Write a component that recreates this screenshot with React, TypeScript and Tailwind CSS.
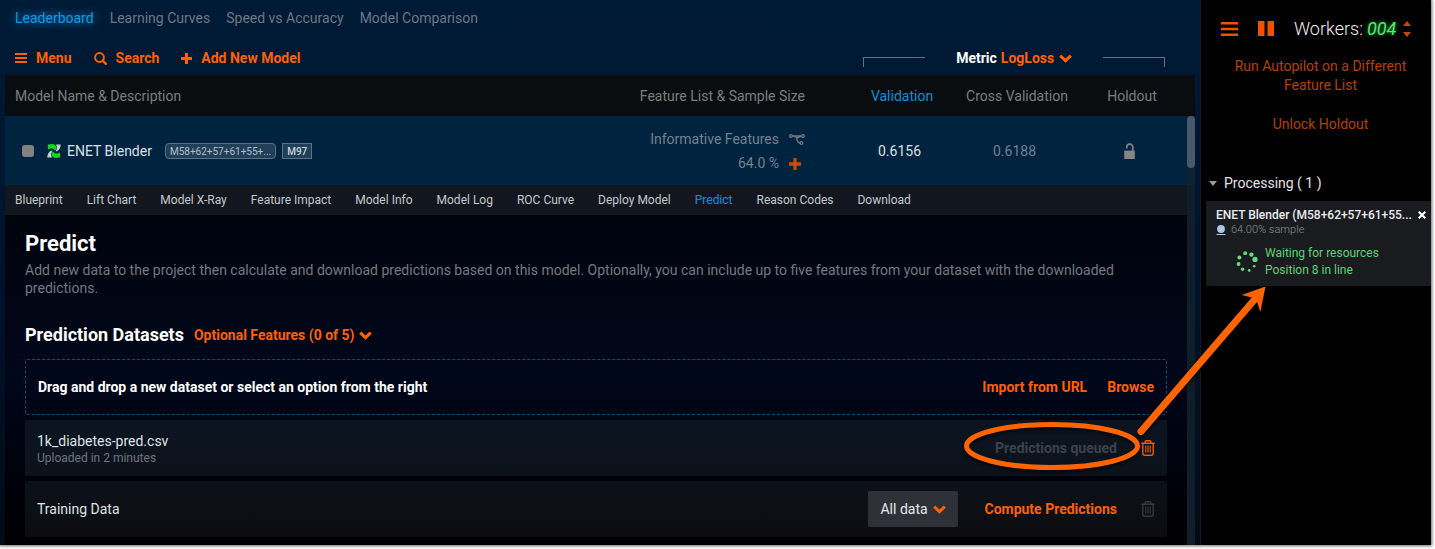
import React from "react";

const views = ["Leaderboard", "Learning Curves", "Speed vs Accuracy", "Model Comparison"];

const modelTabs = [
  "Blueprint",
  "Lift Chart",
  "Model X-Ray",
  "Feature Impact",
  "Model Info",
  "Model Log",
  "ROC Curve",
  "Deploy Model",
  "Predict",
  "Reason Codes",
  "Download",
];

type IconProps = { className?: string };

function BarsIcon({ className }: IconProps) {
  return (
    <svg viewBox="0 0 12 10" className={className} fill="currentColor" aria-hidden="true">
      <path d="M0 0h12v2H0zM0 4h12v2H0zM0 8h12v2H0z" />
    </svg>
  );
}

function SearchIcon({ className }: IconProps) {
  return (
    <svg viewBox="0 0 13 13" className={className} fill="none" stroke="currentColor" strokeWidth="2" aria-hidden="true">
      <circle cx="5.5" cy="5.5" r="4.4" />
      <path d="M8.8 8.8 11.8 11.8" strokeWidth="2.4" strokeLinecap="round" />
    </svg>
  );
}

function PlusIcon({ className }: IconProps) {
  return (
    <svg viewBox="0 0 11 11" className={className} fill="currentColor" aria-hidden="true">
      <path d="M4 0h3v4h4v3H7v4H4V7H0V4h4z" />
    </svg>
  );
}

function ChevronIcon({ className }: IconProps) {
  return (
    <svg viewBox="0 0 13 9" className={className} fill="none" stroke="currentColor" strokeWidth="3" aria-hidden="true">
      <path d="M1.2 1.6 6.5 6.6l5.3-5" />
    </svg>
  );
}

function TrashIcon({ className }: IconProps) {
  return (
    <svg viewBox="0 0 14 16" className={className} fill="none" stroke="currentColor" strokeWidth="1.4" aria-hidden="true">
      <path d="M0.3 3.2h13.4M4.2 3V1.6Q4.2 0.8 5 0.8h4q0.8 0 0.8 0.8V3M1.8 3.4v10.4q0 1.4 1.4 1.4h7.6q1.4 0 1.4-1.4V3.4" />
      <path d="M4.8 5.6v7M7 5.6v7M9.2 5.6v7" strokeWidth="1.1" />
    </svg>
  );
}

function FeatureListIcon() {
  return (
    <svg viewBox="0 0 16 11" className="h-[11px] w-4" fill="none" stroke="#6f7a83" strokeWidth="1.3" aria-hidden="true">
      <circle cx="2" cy="2" r="1.3" />
      <circle cx="14" cy="2" r="1.3" />
      <circle cx="12.4" cy="9" r="1.3" />
      <path d="M3.4 2h9.2M5 2.4l2.6 1.4q.6 4.600 3.400 5.200M11.600 2.600 8 3.800" />
    </svg>
  );
}

function BlenderLogo() {
  return (
    <svg viewBox="0 0 14 14" className="h-[14px] w-[14px] shrink-0" aria-hidden="true">
      <path d="M9 0.400h4.700C13.600 4 12 6.800 8.600 7.400 9.600 5.400 10.400 3.400 9 .4z" fill="#b4d3cc" />
      <path d="M5 13.600H.3C.4 10 2 7.200 5.400 6.600 4.400 8.600 3.600 10.600 5 13.600z" fill="#b4d3cc" />
      <path d="M.8.8Q5-.8 8 .8q2.400 2.600.2 6Q6.600 3.800 3.600 4.600L1 5.600z" fill="#0fd91a" />
      <path d="M13.200 13.200q-4.200 1.600-7.200 0-2.400-2.600-.2-6 1.600 3 4.600 2.200l2.600-1z" fill="#0fd91a" />
    </svg>
  );
}

function UnlockIcon() {
  return (
    <svg viewBox="0 0 11 16" className="h-4 w-[11px]" aria-hidden="true">
      <path d="M0.2 7.6h10.600V16H0.200z" fill="#858585" />
      <path d="M8.800 8V4.200a3 3 0 0 0-6-.2v1.600" fill="none" stroke="#858585" strokeWidth="1.6" />
    </svg>
  );
}

function Spinner() {
  const dots = [
    [11.2, 2.2, 1.9],
    [17.4, 3.6, 2.2],
    [21, 8.4, 2.6],
    [20.2, 15.2, 1.3],
    [15.2, 19.4, 1.4],
    [8.6, 18.2, 1.7],
    [4.6, 13, 1.9],
    [5.4, 6.6, 2],
  ];
  return (
    <svg viewBox="2 0 22 22" className="h-[22px] w-[22px] shrink-0" fill="#63dc7c" aria-hidden="true">
      {dots.map(([x, y, r]) => (
        <circle key={x} cx={x} cy={y} r={r} />
      ))}
    </svg>
  );
}

function Toolbar() {
  const action = "flex items-center gap-[9px] text-[14px] font-bold text-[#ff6000]";
  return (
    <div className="flex h-[39px] items-center pl-[15px] pr-[35px] pt-[5px]">
      <div className="flex flex-1 items-center gap-[22px]">
        <button className={action}>
          <BarsIcon className="h-[10px] w-3" />
          Menu
        </button>
        <button className={action}>
          <SearchIcon className="h-[13px] w-[13px]" />
          Search
        </button>
        <button className={action}>
          <PlusIcon className="h-[11px] w-[11px]" />
          Add New Model
        </button>
      </div>
      <div className="flex w-[302px] items-center justify-between">
        <span className="mt-2 h-[10px] w-[62px] border-l border-t border-[#667482]" />
        <label className="flex items-center gap-1 text-[14px] font-bold text-white">
          Metric
          <span className="flex items-center gap-1 text-[#ff6000]">
            <select className="appearance-none bg-transparent">
              <option>LogLoss</option>
            </select>
            <ChevronIcon className="h-[9px] w-[13px]" />
          </span>
        </label>
        <span className="mt-2 h-[10px] w-[62px] border-r border-t border-[#667482]" />
      </div>
    </div>
  );
}

function Leaderboard() {
  return (
    <table className="w-full table-fixed border-collapse text-[14px]">
      <colgroup>
        <col />
        <col className="w-[320px]" />
        <col className="w-[110px]" />
        <col className="w-[120px]" />
        <col className="w-[110px]" />
        <col className="w-2" />
      </colgroup>
      <thead>
        <tr className="h-[41px] bg-[#090d0f] text-[#7b7d7f] [&>th]:pt-[2px]">
          <th className="pl-[10px] text-left font-normal">Model Name &amp; Description</th>
          <th className="pr-[42px] text-right font-normal">Feature List &amp; Sample Size</th>
          <th className="font-normal text-[#0b8fdc]">Validation</th>
          <th className="font-normal">Cross Validation</th>
          <th className="font-normal">Holdout</th>
          <td />
        </tr>
      </thead>
      <tbody>
        <tr className="h-[69px] bg-[#002340]">
          <td className="pl-[17px] pt-px">
            <div className="flex items-center">
              <input
                type="checkbox"
                aria-label="Select ENET Blender"
                className="mr-[13px] h-3 w-3 appearance-none rounded-[3px] bg-[#828282]"
              />
              <BlenderLogo />
              <span className="ml-[6px] mr-[13px] text-[#dbe0e4]">ENET Blender</span>
              <span className="mr-[6px] flex h-4 items-center rounded-[4px] border border-[#5c7183] bg-[#20405a] px-1 text-[10px] text-[#b3bdc5]">
                M58+62+57+61+55+...
              </span>
              <span className="flex h-4 items-center border border-[#5c7183] bg-[#20405a] px-1 text-[10px] font-medium text-[#ccd3d8]">
                M97
              </span>
            </div>
          </td>
          <td className="pr-[42px] pt-[2px] text-[#75818c]">
            <div className="flex h-6 items-center justify-end gap-[10px]">
              Informative Features
              <FeatureListIcon />
            </div>
            <div className="flex h-6 items-center justify-end gap-[10px]">
              64.0 %
              <button aria-label="Add sample size" className="flex w-4 text-[#c74d09]">
                <PlusIcon className="h-3 w-3" />
              </button>
            </div>
          </td>
          <td className="pr-[5px] pt-[2px] text-center text-[#dbe0e4]">0.6156</td>
          <td className="pr-[5px] pt-[2px] text-center text-[#75818c]">0.6188</td>
          <td>
            <div className="flex justify-center pr-[5px]">
              <UnlockIcon />
            </div>
          </td>
          <td className="bg-[#0d2233] align-top">
            <div className="h-[52px] rounded-full bg-[#4a5969]" />
          </td>
        </tr>
      </tbody>
    </table>
  );
}

function Predict() {
  return (
    <section className="bg-linear-to-b from-[#00040d] via-[#00071a] to-[#000003] px-5 pb-2 pt-[15px]">
      <h1 className="text-[22px] leading-[28px] font-bold text-white">Predict</h1>
      <p className="mt-[3px] text-[14px] leading-[18px] text-[#747a82]">
        Add new data to the project then calculate and download predictions based on this model. Optionally, you can
        include up to five features from your dataset with the downloaded predictions.
      </p>
      <div className="mt-[26px] flex items-center gap-[10px]">
        <h2 className="text-[18px] leading-6 font-bold text-white">Prediction Datasets</h2>
        <button className="flex items-center gap-1 text-[14px] font-bold text-[#ff6000]">
          Optional Features (0 of 5)
          <ChevronIcon className="h-[9px] w-[13px]" />
        </button>
      </div>
      <div className="mt-3 flex h-14 items-center rounded-[2px] border border-dashed border-[#06507c] px-3 text-[14px] font-bold">
        <span className="flex-1 text-white">Drag and drop a new dataset or select an option from the right</span>
        <button className="mr-5 text-[#ff6000]">Import from URL</button>
        <button className="text-[#ff6000]">Browse</button>
      </div>
      <div className="mt-[5px] flex h-14 items-center rounded-[2px] bg-linear-to-b from-[#0b1521] to-[#0c121b] px-3">
        <div className="flex-1 pt-[2px]">
          <div className="text-[14px] leading-[18px] text-[#dfe2e5]">1k_diabetes-pred.csv</div>
          <div className="text-[12px] leading-4 text-[#70757c]">Uploaded in 2 minutes</div>
        </div>
        <span className="mr-6 text-[14px] font-bold text-[#3b424b]">Predictions queued</span>
        <button aria-label="Delete 1k_diabetes-pred.csv" className="text-[#ef5c05]">
          <TrashIcon className="h-4 w-[14px]" />
        </button>
      </div>
      <div className="mt-[5px] flex h-14 items-center rounded-[2px] bg-linear-to-b from-[#0c1119] to-[#0c0d11] px-3">
        <span className="flex-1 text-[14px] text-[#dfe2e5]">Training Data</span>
        <label className="relative mr-[26px] flex h-9 w-[90px] items-center rounded-[2px] bg-[#2e3238] text-[14px] text-[#e6e8ea]">
          <select aria-label="Rows to score" className="h-full w-full appearance-none pl-3">
            <option>All data</option>
          </select>
          <ChevronIcon className="pointer-events-none absolute right-3 h-[9px] w-[13px] text-[#ff6000]" />
        </label>
        <button className="mr-6 text-[14px] font-bold text-[#ff6000]">Compute Predictions</button>
        <button aria-label="Delete training data" disabled className="text-[#363a3f]">
          <TrashIcon className="h-4 w-[14px]" />
        </button>
      </div>
    </section>
  );
}

function Sidebar() {
  return (
    <aside className="w-[230px] shrink-0 bg-black">
      <div className="flex h-[57px] items-center pl-5 text-[#f45000]">
        <button aria-label="Queue menu">
          <svg viewBox="0 0 17 14" className="h-[14px] w-[17px]" fill="currentColor" aria-hidden="true">
            <path d="M0 0h17v2.600H0zM0 5.700h17v2.600H0zM0 11.400h17V14H0z" />
          </svg>
        </button>
        <button aria-label="Pause" className="ml-5">
          <svg viewBox="0 0 16 15" className="h-[15px] w-4" fill="currentColor" aria-hidden="true">
            <path d="M0 0h6.500v15H0zM9.500 0H16v15H9.500z" />
          </svg>
        </button>
        <span className="ml-5 text-[18px] font-light text-[#f0f0f0]">Workers:</span>
        <span className="ml-1 text-[18px] font-normal italic text-[#5ae878] [text-shadow:0_0_5px_#12b83a]">004</span>
        <div className="ml-[7px] flex flex-col gap-[6px] text-[#c04a10]">
          <button aria-label="More workers">
            <svg viewBox="0 0 8 5" className="h-[5px] w-2" fill="currentColor" aria-hidden="true">
              <path d="M4 0l4 5H0z" />
            </svg>
          </button>
          <button aria-label="Fewer workers">
            <svg viewBox="0 0 8 5" className="h-[5px] w-2" fill="currentColor" aria-hidden="true">
              <path d="M4 5l4-5H0z" />
            </svg>
          </button>
        </div>
      </div>
      <div className="flex flex-col items-center gap-5 pl-[9px] text-center text-[14px] leading-[19px] text-[#b34200]">
        <a href="#autopilot" className="w-[200px]">
          Run Autopilot on a Different Feature List
        </a>
        <a href="#holdout">Unlock Holdout</a>
      </div>
      <button className="mt-[37px] flex h-6 items-center pl-2 text-[14px] text-[#e4e4e4]">
        <svg viewBox="0 0 8 5" className="mr-[7px] h-[5px] w-2" fill="#9a9a9a" aria-hidden="true">
          <path d="M0 0h8L4 5z" />
        </svg>
        Processing ( 1 )
      </button>
      <div className="ml-[5px] mt-[6px] h-[85px] bg-[#191b1f] pl-[10px] pr-[5px] pt-[6px]">
        <div className="flex items-center justify-between text-[12px] leading-4 text-[#ececec]">
          <span className="font-medium whitespace-nowrap">ENET Blender (M58+62+57+61+55...</span>
          <button aria-label="Cancel">
            <svg viewBox="0 0 8 8" className="h-2 w-2" stroke="#fff" strokeWidth="2" aria-hidden="true">
              <path d="M.7.7l6.600 6.600M7.300.7L.7 7.300" />
            </svg>
          </button>
        </div>
        <div className="flex items-center gap-[5px] text-[11px] leading-[14px] font-light text-[#8c8f93]">
          <svg viewBox="0 0 10 10" className="h-[10px] w-[10px]" fill="#a9c8ea" aria-hidden="true">
            <circle cx="5" cy="4" r="3.9" />
            <path d="M0.500 9h9v1h-9z" />
          </svg>
          64.00% sample
        </div>
        <div className="mt-2 flex items-center gap-[7px] pl-5 text-[12px] leading-[17px] text-[#5fd378]">
          <Spinner />
          <span>
            Waiting for resources
            <br />
            Position 8 in line
          </span>
        </div>
      </div>
    </aside>
  );
}

function Callout() {
  return (
    <svg
      viewBox="0 0 480 545"
      className="pointer-events-none absolute right-0 top-0 h-[545px] w-[480px] drop-shadow-[0_2px_2px_rgba(0,0,0,0.7)]"
      aria-hidden="true"
    >
      <ellipse cx="101" cy="446" rx="85.5" ry="21.5" fill="none" stroke="#ff6400" strokeWidth="5" />
      <path d="M190 431.500L304 299" stroke="#ff6400" strokeWidth="7" strokeLinecap="round" />
      <path d="M314.500 286.500L290.700 295l10.800 2.700 5 5 2.800 9.300z" fill="#ff6400" />
    </svg>
  );
}

export default function App() {
  return (
    <div className="min-h-screen bg-white pb-1 pr-1 font-['Roboto',sans-serif]">
      <div className="relative flex bg-black shadow-[0_0_3px_1px_rgba(0,0,0,0.6)]">
        <main className="min-w-0 flex-1 border-r border-[#0a1c30] bg-linear-to-b from-[#001b36] via-[#00122c] to-[#000b14]">
          <nav className="flex h-9 items-center gap-4 pl-[15px] text-[14px] text-[#6d7883]">
            {views.map((view) => (
              <a
                key={view}
                href="#view"
                className={view === "Leaderboard" ? "text-[#0e9be8] [text-shadow:0_0_10px_#0e9be8]" : ""}
              >
                {view}
              </a>
            ))}
          </nav>
          <Toolbar />
          <div className="mx-[5px]">
            <Leaderboard />
            <div className="flex">
              <div className="min-w-0 flex-1">
                <nav className="flex h-[30px] items-center gap-6 bg-[#12171f] pl-[10px] text-[12px] text-[#c4c8cc]">
                  {modelTabs.map((tab) => (
                    <a key={tab} href="#tab" className={tab === "Predict" ? "text-[#0b95e0]" : ""}>
                      {tab}
                    </a>
                  ))}
                </nav>
                <Predict />
              </div>
              <div className="w-2 bg-[#0f1e28]" />
            </div>
          </div>
        </main>
        <Sidebar />
        <Callout />
      </div>
    </div>
  );
}
